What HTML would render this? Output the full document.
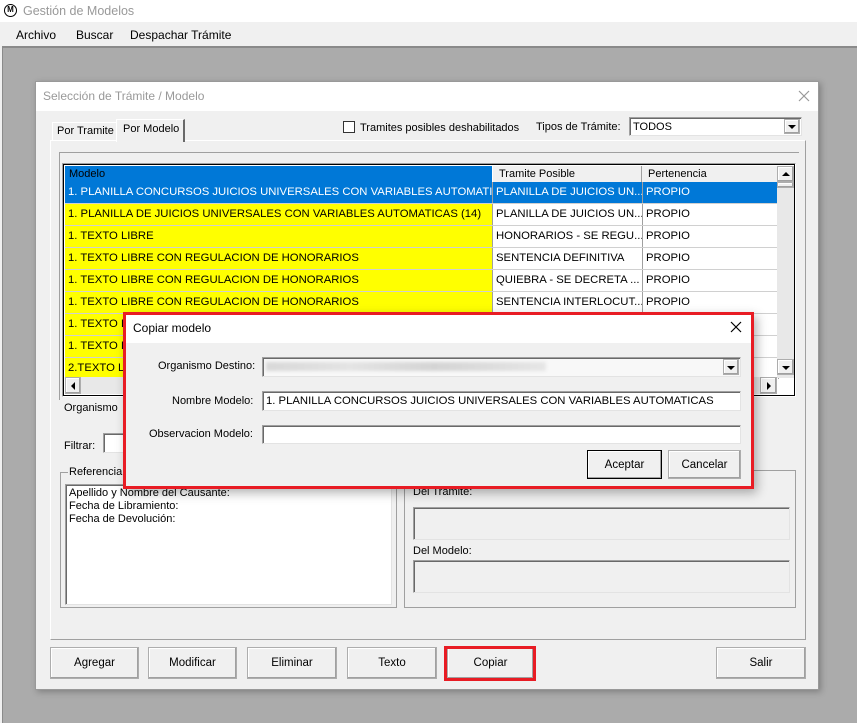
<!DOCTYPE html>
<html><head><meta charset="utf-8"><style>
*{box-sizing:border-box;margin:0;padding:0}
body{width:857px;height:723px;position:relative;overflow:hidden;background:#ababab;font-family:"Liberation Sans",sans-serif;font-size:11px;color:#000}
.a{position:absolute}
.t{position:absolute;white-space:nowrap;line-height:14px}
.btn{position:absolute;border:1px solid #adadad;box-shadow:inset -1px -1px 0 #a0a0a0, inset 1px 1px 0 #fff;display:flex;align-items:center;justify-content:center;background:#f0f0f0;font-size:11.5px}
.sunk{position:absolute;background:#fff;border:1px solid #a0a0a0;border-right-color:#e3e3e3;border-bottom-color:#e3e3e3;box-shadow:inset 1px 1px 0 #696969}
.row{position:absolute;left:0;height:22px;width:712px;border-bottom:1px solid #d0d0d0}
.row div{position:absolute;top:0;height:21px;line-height:21px;padding-left:3px;white-space:nowrap;overflow:hidden;border-right:1px solid #a0a0a0;font-size:11.3px}
.c1{left:0;width:428px;background:#ffff00}
.c2{left:428px;width:150px;background:#fff}
.c3{left:578px;width:136px;background:#fff}
.sel div{background:#0078d7!important;color:#fff}
.arrow{width:0;height:0;border-left:4px solid transparent;border-right:4px solid transparent;border-top:4px solid #000;position:absolute}
</style></head><body>
<div class="a" style="left:0;top:0;width:857px;height:22px;background:#fff"></div>
<div class="a" style="left:4px;top:4px;width:13px;height:13px;border:1.5px solid #000;border-radius:50%;font-size:8px;font-weight:bold;text-align:center;line-height:10px">M</div>
<div class="t" style="left:23px;top:4px;font-size:12.5px;color:#999">Gestión de Modelos</div>
<div class="a" style="left:0;top:22px;width:857px;height:24px;background:#f0f0f0"></div>
<div class="t" style="left:16px;top:28px;font-size:12px">Archivo</div>
<div class="t" style="left:76px;top:28px;font-size:12px">Buscar</div>
<div class="t" style="left:130px;top:28px;font-size:12px">Despachar Trámite</div>
<div class="a" style="left:0;top:46px;width:857px;height:2px;background:#8a8a8a"></div>
<div class="a" style="left:0;top:46px;width:3px;height:677px;background:#f0f0f0;border-right:1px solid #8a8a8a"></div>

<div class="a" style="left:35px;top:81px;width:784px;height:609px;background:#f0f0f0;border:1px solid #999;box-shadow:2px 2px 6px rgba(0,0,0,.25)"></div>
<div class="a" style="left:36px;top:82px;width:782px;height:29px;background:#fff"></div>
<div class="t" style="left:43px;top:89px;font-size:12px;color:#999">Selección de Trámite / Modelo</div>
<svg class="a" style="left:798px;top:90px" width="12" height="12"><path d="M1 1L11 11M11 1L1 11" stroke="#999" stroke-width="1.2"/></svg>

<div class="a" style="left:50px;top:140px;width:756px;height:500px;border:1px solid #fff;border-right-color:#a0a0a0;border-bottom-color:#a0a0a0"></div>
<div class="a" style="left:52px;top:122px;width:64px;height:19px;border:1px solid #fff;border-right:none;background:#f0f0f0"></div>
<div class="t" style="left:57px;top:124px">Por Tramite</div>
<div class="a" style="left:116px;top:119px;width:69px;height:23px;border:1px solid #fff;border-right:2px solid #696969;border-bottom:none;background:#f0f0f0"></div>
<div class="t" style="left:123px;top:122px">Por Modelo</div>

<div class="a" style="left:343px;top:121px;width:12px;height:12px;background:#fff;border:1px solid #333"></div>
<div class="t" style="left:360px;top:121px">Tramites posibles deshabilitados</div>
<div class="t" style="left:536px;top:120px">Tipos de Trámite:</div>
<div class="sunk" style="left:629px;top:117px;width:173px;height:19px"></div>
<div class="t" style="left:633px;top:120px">TODOS</div>
<div class="btn" style="left:784px;top:119px;width:16px;height:15px"><div class="arrow" style="left:3px;top:5px"></div></div>

<div class="a" style="left:59px;top:152px;width:740px;height:248px;border-left:1px solid #a0a0a0;border-top:1px solid #a0a0a0"></div>
<div class="a" style="left:62px;top:163px;width:734px;height:234px;border:1px solid #a0a0a0;border-right-color:#fff;border-bottom-color:#fff;background:#fff"></div>
<div class="a" style="left:63px;top:164px;width:732px;height:232px;border:1px solid #000;background:#fff;overflow:hidden">
  <div class="a" style="left:1px;top:1px;width:712px;height:16px;background:#f0f0f0"></div>
  <div class="t" style="left:1px;top:1px;width:427px;height:16px;background:#0078d7;padding-left:4px;line-height:16px">Modelo</div>
  <div class="t" style="left:428px;top:1px;width:150px;height:16px;border-left:1px solid #fff;border-right:1px solid #a0a0a0;padding-left:6px;line-height:16px">Tramite Posible</div>
  <div class="t" style="left:579px;top:1px;width:134px;height:16px;padding-left:5px;line-height:16px">Pertenencia</div>
  <div class="a" style="left:1px;top:17px;width:712px;height:214px">
    <div class="row sel" style="top:0"><div class="c1">1. PLANILLA CONCURSOS JUICIOS UNIVERSALES CON VARIABLES AUTOMATIC...</div><div class="c2">PLANILLA DE JUICIOS UN...</div><div class="c3">PROPIO</div></div>
    <div class="row" style="top:22px"><div class="c1">1. PLANILLA DE JUICIOS UNIVERSALES CON VARIABLES AUTOMATICAS (14)</div><div class="c2">PLANILLA DE JUICIOS UN...</div><div class="c3">PROPIO</div></div>
    <div class="row" style="top:44px"><div class="c1">1. TEXTO LIBRE</div><div class="c2">HONORARIOS - SE REGU...</div><div class="c3">PROPIO</div></div>
    <div class="row" style="top:66px"><div class="c1">1. TEXTO LIBRE CON REGULACION DE HONORARIOS</div><div class="c2">SENTENCIA DEFINITIVA</div><div class="c3">PROPIO</div></div>
    <div class="row" style="top:88px"><div class="c1">1. TEXTO LIBRE CON REGULACION DE HONORARIOS</div><div class="c2">QUIEBRA - SE DECRETA ...</div><div class="c3">PROPIO</div></div>
    <div class="row" style="top:110px"><div class="c1">1. TEXTO LIBRE CON REGULACION DE HONORARIOS</div><div class="c2">SENTENCIA INTERLOCUT...</div><div class="c3">PROPIO</div></div>
    <div class="row" style="top:132px"><div class="c1">1. TEXTO LIBRE</div><div class="c2"></div><div class="c3"></div></div>
    <div class="row" style="top:154px"><div class="c1">1. TEXTO LIBRE</div><div class="c2"></div><div class="c3"></div></div>
    <div class="row" style="top:176px"><div class="c1">2.TEXTO LIBRE</div><div class="c2"></div><div class="c3"></div></div>
  </div>
  <div class="a" style="left:713px;top:1px;width:17px;height:212px;background:#e8e8e8"></div>
  <div class="btn" style="left:713px;top:1px;width:17px;height:16px"><div class="arrow" style="left:4px;top:5px;border-top:none;border-bottom:4px solid #000"></div></div>
  <div class="btn" style="left:713px;top:17px;width:17px;height:6px"></div>
  <div class="btn" style="left:713px;top:194px;width:17px;height:16px"><div class="arrow" style="left:4px;top:6px"></div></div>
  <div class="a" style="left:1px;top:212px;width:712px;height:17px;background:#e8e8e8"></div>
  <div class="btn" style="left:1px;top:212px;width:16px;height:17px"><div class="arrow" style="left:5px;top:4px;border:4px solid transparent;border-right:4px solid #000;border-left:none"></div></div>
  <div class="btn" style="left:696px;top:212px;width:17px;height:17px"><div class="arrow" style="left:6px;top:4px;border:4px solid transparent;border-left:4px solid #000;border-right:none"></div></div>
</div>

<div class="t" style="left:64px;top:401px">Organismo</div>
<div class="t" style="left:64px;top:439px">Filtrar:</div>
<div class="sunk" style="left:103px;top:433px;width:30px;height:20px"></div>

<div class="a" style="left:60px;top:472px;width:337px;height:136px;border:1px solid #a0a0a0"></div>
<div class="t" style="left:68px;top:465px;background:#f0f0f0;padding:0 1px">Referencia</div>
<div class="sunk" style="left:65px;top:484px;width:327px;height:121px;font-size:11px;line-height:13px;padding:2px 3px">Apellido y Nombre del Causante:<br>Fecha de Libramiento:<br>Fecha de Devolución:</div>
<div class="a" style="left:404px;top:470px;width:392px;height:138px;border:1px solid #a0a0a0"></div>
<div class="t" style="left:413px;top:485px">Del Trámite:</div>
<div class="sunk" style="left:413px;top:507px;width:377px;height:33px;background:#f0f0f0"></div>
<div class="t" style="left:413px;top:544px">Del Modelo:</div>
<div class="sunk" style="left:413px;top:560px;width:377px;height:33px;background:#f0f0f0"></div>

<div class="btn" style="left:50px;top:647px;width:89px;height:32px">Agregar</div>
<div class="btn" style="left:148px;top:647px;width:89px;height:32px">Modificar</div>
<div class="btn" style="left:247px;top:647px;width:90px;height:32px">Eliminar</div>
<div class="btn" style="left:347px;top:647px;width:90px;height:32px">Texto</div>
<div class="btn" style="left:447px;top:647px;width:87px;height:32px">Copiar</div>
<div class="a" style="left:444px;top:646px;width:92px;height:35px;border:3px solid #e81c24"></div>
<div class="btn" style="left:716px;top:647px;width:90px;height:32px">Salir</div>

<div class="a" style="left:123px;top:312px;width:631px;height:177px;border:3px solid #e81c24;background:#f0f0f0;box-shadow:3px 4px 10px rgba(0,0,0,.3)"></div>
<div class="a" style="left:126px;top:315px;width:625px;height:28px;background:#fff"></div>
<div class="t" style="left:133px;top:321px;font-size:12px">Copiar modelo</div>
<svg class="a" style="left:730px;top:321px" width="12" height="12"><path d="M1 1L11 11M11 1L1 11" stroke="#000" stroke-width="1.2"/></svg>
<div class="t" style="left:158px;top:359px">Organismo Destino:</div>
<div class="sunk" style="left:262px;top:357px;width:479px;height:20px;background:#f8f8f8"></div>
<div class="a" style="left:266px;top:362px;width:280px;height:9px;background:linear-gradient(90deg,#d8d8d8,#e4e4e4 30%,#d4d4d4 60%,#e6e6e6);filter:blur(1.5px)"></div>
<div class="btn" style="left:723px;top:359px;width:16px;height:16px"><div class="arrow" style="left:3px;top:6px"></div></div>
<div class="t" style="left:172px;top:394px">Nombre Modelo:</div>
<div class="sunk" style="left:262px;top:391px;width:479px;height:20px;padding:2px 3px;line-height:14px;white-space:nowrap;overflow:hidden;font-size:11.3px">1. PLANILLA CONCURSOS JUICIOS UNIVERSALES CON VARIABLES AUTOMATICAS</div>
<div class="t" style="left:149px;top:427px">Observacion Modelo:</div>
<div class="sunk" style="left:262px;top:425px;width:479px;height:19px"></div>
<div class="btn" style="left:587px;top:450px;width:75px;height:29px;border:1px solid #000">Aceptar</div>
<div class="btn" style="left:668px;top:450px;width:73px;height:29px">Cancelar</div>
</body></html>
